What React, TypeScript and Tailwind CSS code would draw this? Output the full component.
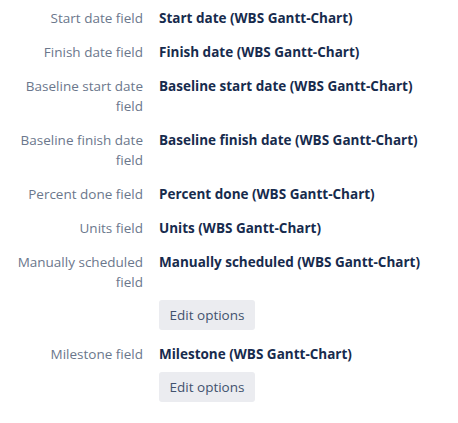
const rows: { label: string; value: string; edit?: boolean }[] = [
  { label: "Start date field", value: "Start date (WBS Gantt-Chart)" },
  { label: "Finish date field", value: "Finish date (WBS Gantt-Chart)" },
  { label: "Baseline start date field", value: "Baseline start date (WBS Gantt-Chart)" },
  { label: "Baseline finish date field", value: "Baseline finish date (WBS Gantt-Chart)" },
  { label: "Percent done field", value: "Percent done (WBS Gantt-Chart)" },
  { label: "Units field", value: "Units (WBS Gantt-Chart)" },
  { label: "Manually scheduled field", value: "Manually scheduled (WBS Gantt-Chart)", edit: true },
  { label: "Milestone field", value: "Milestone (WBS Gantt-Chart)", edit: true },
];

export default function App() {
  return (
    <div className="min-h-[423px] w-[458px] bg-white pt-2 font-['Open_Sans',sans-serif] text-[13.5px] leading-5">
      <div className="grid grid-cols-[143px_1fr] gap-x-4 gap-y-[14px]">
        {rows.map((row) => (
          <div key={row.label} className="contents">
            <div className="pl-3 text-right text-[#6B778C]">{row.label}</div>
            <div className="font-bold text-[#172B4D]">{row.value}</div>
            {row.edit && (
              <>
                <div />
                <div className="-mt-1.5">
                  <button className="h-[30px] w-24 rounded-[3px] bg-[#EBECF0] text-[#42526E]">
                    Edit options
                  </button>
                </div>
              </>
            )}
          </div>
        ))}
      </div>
    </div>
  );
}
